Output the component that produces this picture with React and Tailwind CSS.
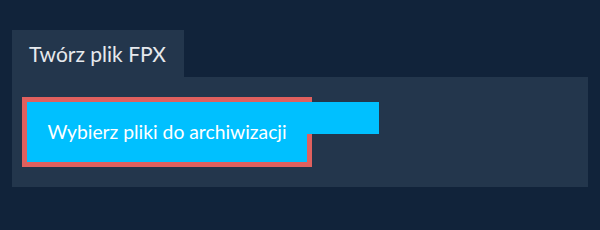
import React from 'react'

function App()
{
    return (
        <div className="min-h-[230px] w-full bg-[#11233a] px-3 pt-[30px]" style={{ fontFamily: 'Lato, "Noto Sans", sans-serif' }}>
            <div className="flex">
                <div className="flex h-[47px] w-[172px] items-center bg-[#23364c] pl-[17px] text-[21px] text-[#e6e9ed]">
                    Twórz plik FPX
                </div>
            </div>
            <div className="bg-[#23364c] px-[15px] py-[25px]">
                <div className="flex items-start">
                    <button
                        type="button"
                        className="flex h-[60px] w-[280px] items-center justify-center bg-[#00c0ff] text-[19.3px] text-white outline-[5px] outline-solid outline-[#e0605e]"
                    >
                        Wybierz pliki do archiwizacji
                    </button>
                    <div className="h-[32px] w-[72px] bg-[#00c0ff]"></div>
                </div>
            </div>
        </div>
    )
}

export default App
